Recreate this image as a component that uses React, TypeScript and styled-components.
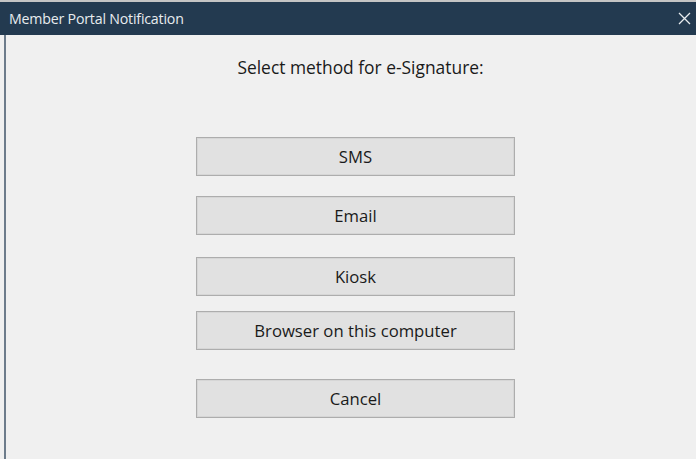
import React from 'react';
import styled, { createGlobalStyle } from 'styled-components';

const GlobalStyle = createGlobalStyle`
  html, body {
    margin: 0;
    padding: 0;
    background: #f0f0f0;
  }
  body {
    font-family: "Open Sans", "Noto Sans", "Liberation Sans", sans-serif;
  }
`;

const Window = styled.div`
  width: 696px;
  height: 459px;
  display: flex;
  flex-direction: column;
  border-top: 2px solid #c4c4c4;
  box-sizing: border-box;
  overflow: hidden;
`;

const TitleBar = styled.div`
  height: 33px;
  flex: none;
  display: flex;
  align-items: center;
  justify-content: space-between;
  background: #233a50;
  padding: 0 2px 0 9px;
`;

const TitleText = styled.span`
  color: #e8ecef;
  font-size: 14.2px;
  letter-spacing: -0.2px;
`;

const CloseButton = styled.button`
  width: 20px;
  height: 22px;
  display: flex;
  align-items: center;
  justify-content: center;
  padding: 0;
  border: none;
  background: none;
  cursor: pointer;
`;

const Body = styled.div`
  flex: 1;
  margin-left: 4px;
  border-left: 2px solid #6d7c8b;
  background: #f0f0f0;
  padding: 21px 0 0 190px;
  display: flex;
  flex-direction: column;
  align-items: flex-start;
`;

const Prompt = styled.div`
  width: 319px;
  padding-left: 5px;
  text-align: center;
  font-size: 17.4px;
  line-height: 23px;
  color: #1a1a1a;
  margin-bottom: 58px;
  white-space: nowrap;
`;

const OptionButton = styled.button<{ $gap: number }>`
  width: 319px;
  height: 39px;
  margin-bottom: ${({ $gap }) => $gap}px;
  box-sizing: border-box;
  border: 1px solid #adadad;
  box-shadow: inset 0 0 0 1px #d6d6d6;
  background: #e1e1e1;
  color: #1a1a1a;
  font-family: inherit;
  font-size: 16.7px;
  padding: 0;
  cursor: pointer;
`;

const options: { label: string; gap: number }[] = [
  { label: 'SMS', gap: 20 },
  { label: 'Email', gap: 22 },
  { label: 'Kiosk', gap: 15 },
  { label: 'Browser on this computer', gap: 29 },
  { label: 'Cancel', gap: 0 },
];

export default function App() {
  return (
    <>
      <GlobalStyle />
      <Window>
        <TitleBar>
          <TitleText>Member Portal Notification</TitleText>
          <CloseButton aria-label="Close">
            <svg width="13" height="13" viewBox="0 0 13 13">
              <path d="M1 1 L12 12 M12 1 L1 12" stroke="#e8ecef" strokeWidth="1.3" />
            </svg>
          </CloseButton>
        </TitleBar>
        <Body>
          <Prompt>Select method for e-Signature:</Prompt>
          {options.map((o) => (
            <OptionButton key={o.label} $gap={o.gap}>
              {o.label}
            </OptionButton>
          ))}
        </Body>
      </Window>
    </>
  );
}
